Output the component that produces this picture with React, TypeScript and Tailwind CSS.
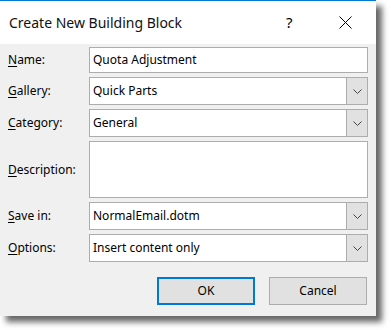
import React from 'react';

const font = { fontFamily: '"Noto Sans", "Liberation Sans", sans-serif' };

const Chevron: React.FC = () => (
  <svg width="9" height="5" viewBox="0 0 9 5" fill="none" aria-hidden="true">
    <path d="M0.5 0.5 L4.5 4.5 L8.5 0.5" stroke="#444" strokeWidth="1" />
  </svg>
);

const Label: React.FC<{ k: string; rest: string }> = ({ k, rest }) => (
  <span className="text-[12px] text-black">
    <span className="underline underline-offset-2">{k}</span>
    {rest}
  </span>
);

const Select: React.FC<{ value: string }> = ({ value }) => (
  <div className="flex h-[28px] border border-[#adadad] bg-white">
    <span className="flex-1 flex items-center pl-[3px] text-[12px] text-black">{value}</span>
    <span className="w-[21px] flex items-center justify-center bg-[#e1e1e1] border-l border-[#adadad]">
      <Chevron />
    </span>
  </div>
);

const rows = [
  { k: 'N', rest: 'ame:', type: 'input', value: 'Quota Adjustment' },
  { k: 'G', rest: 'allery:', type: 'select', value: 'Quick Parts' },
  { k: 'C', rest: 'ategory:', type: 'select', value: 'General' },
  { k: 'D', rest: 'escription:', type: 'area', value: '' },
  { k: 'S', rest: 'ave in:', type: 'select', value: 'NormalEmail.dotm' },
  { k: 'O', rest: 'ptions:', type: 'select', value: 'Insert content only' },
];

export default function App() {
  return (
    <div className="w-[391px] h-[330px] bg-white" style={font}>
      <div className="w-[376px] h-[316px] flex flex-col bg-[#f0f0f0] shadow-[6px_6px_6px_rgba(0,0,0,0.6)]">
        {/* Title bar */}
        <div className="h-[44px] flex items-center bg-white border-t border-[#0078d7]">
          <span className="pl-[9px] text-[14px] text-[#111] flex-1">Create New Building Block</span>
          <span className="w-[20px] text-[15px] text-black mr-[33px]">?</span>
          <svg width="13" height="13" viewBox="0 0 13 13" className="mr-[24px]" aria-hidden="true">
            <path d="M0.5 0.5 L12.5 12.5 M12.5 0.5 L0.5 12.5" stroke="#000" strokeWidth="1" />
          </svg>
        </div>

        {/* Form */}
        <div className="flex flex-col gap-[4px] pt-[3px] pl-[8px] pr-[8px]">
          {rows.map((r) => (
            <div key={r.k} className="grid grid-cols-[81px_1fr] items-center">
              <Label k={r.k} rest={r.rest} />
              {r.type === 'input' && (
                <div className="h-[26px] flex items-center border border-[#adadad] bg-white pl-[3px] text-[12px] text-black">
                  {r.value}
                </div>
              )}
              {r.type === 'select' && <Select value={r.value} />}
              {r.type === 'area' && <div className="h-[57px] border border-[#adadad] bg-white" />}
            </div>
          ))}
        </div>

        {/* Buttons */}
        <div className="flex justify-end gap-[14px] pt-[15px] pr-[9px]">
          <button className="w-[98px] h-[28px] border-2 border-[#0078d7] bg-[#e1e1e1] text-[12px] text-black">OK</button>
          <button className="w-[98px] h-[28px] border border-[#adadad] bg-[#e1e1e1] text-[12px] text-black">Cancel</button>
        </div>
      </div>
    </div>
  );
}
